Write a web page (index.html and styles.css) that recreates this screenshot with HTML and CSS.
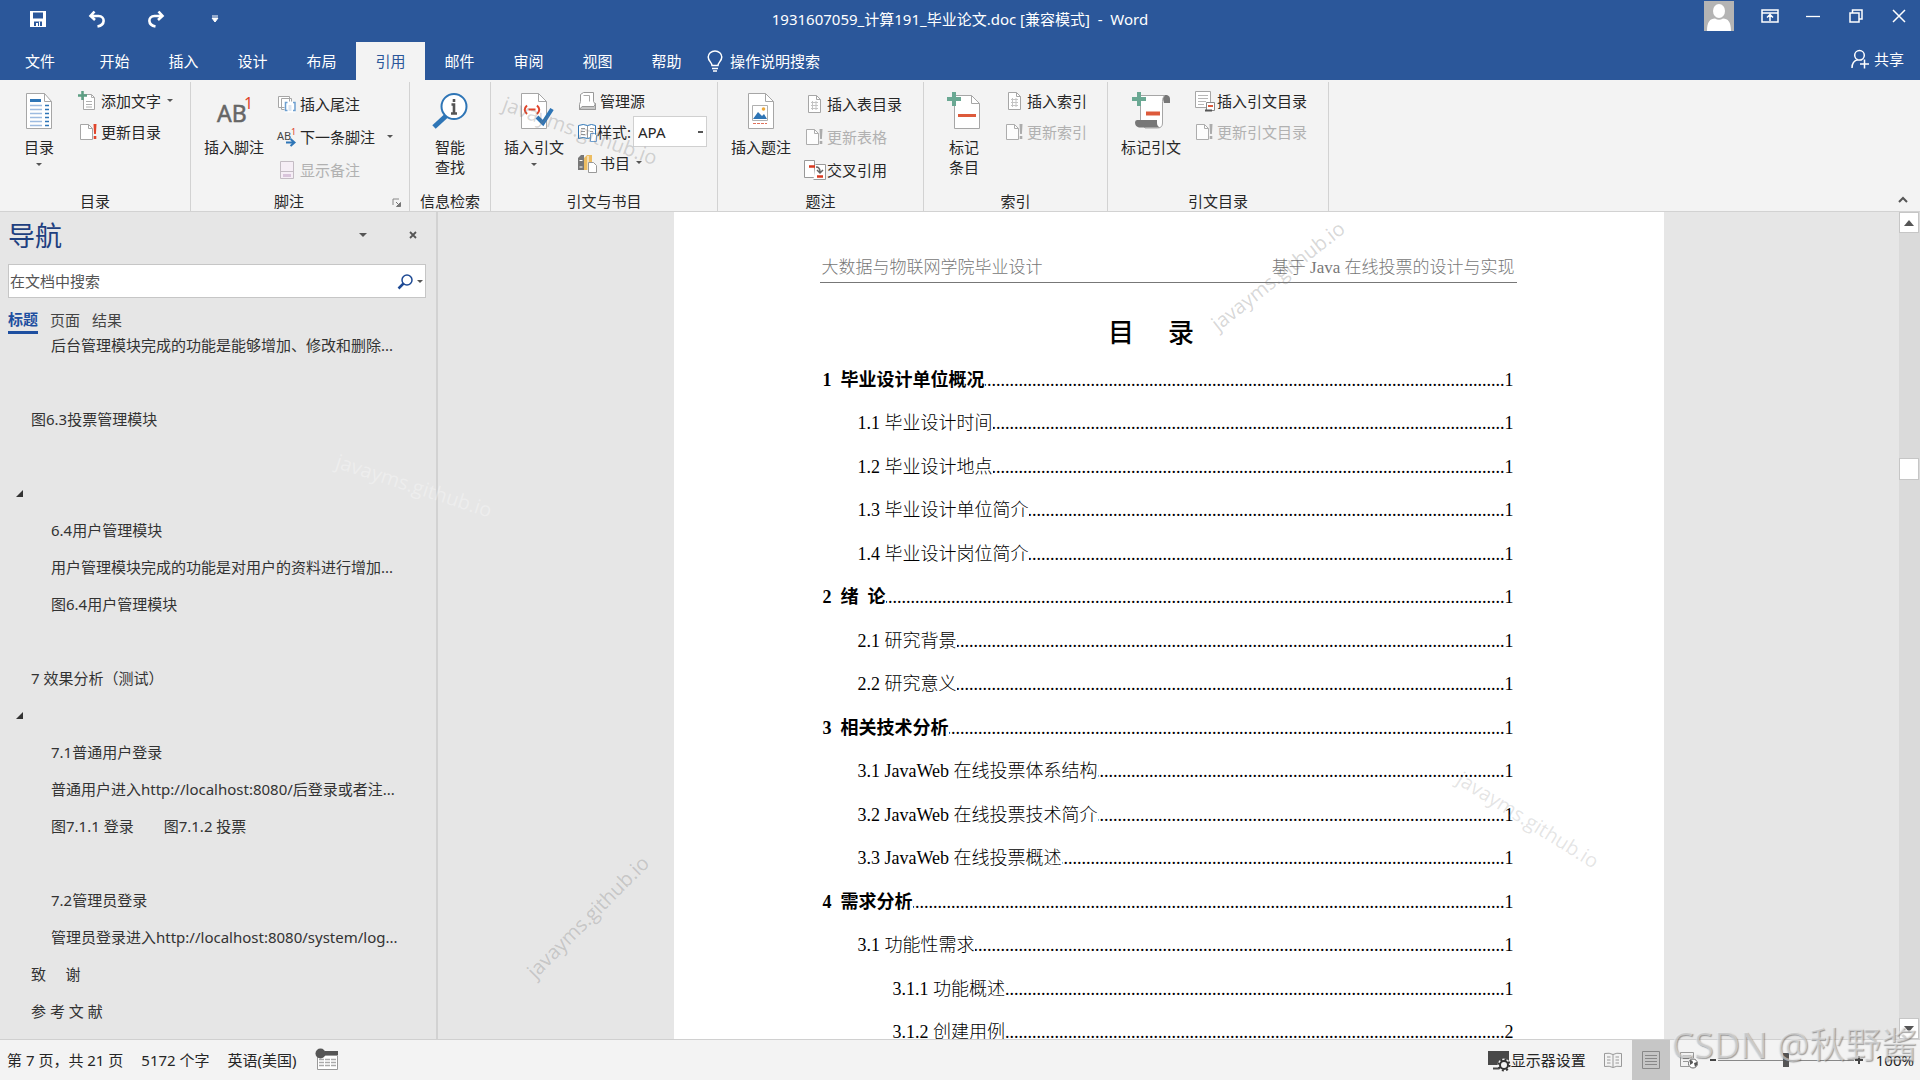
FILE: index.html
```html
<!DOCTYPE html>
<html lang="zh-CN">
<head>
<meta charset="utf-8">
<title>1931607059_计算191_毕业论文.doc - Word</title>
<link rel="stylesheet" href="styles.css">
</head>
<body>
<svg class="defs" aria-hidden="true">
  <symbol id="page-bang" viewBox="0 0 20 20">
    <path d="M2.5 2.5h8l4 4v11h-12z" class="sheet"/><path d="M10.500 2.500v4h4" class="fold"/>
    <path d="M15.500 2h3l-.6 10h-1.800zM15.700 14h2.600v3h-2.600z" class="bang"/>
  </symbol>
  <symbol id="page-lines" viewBox="0 0 20 20">
    <path d="M4.500 1.500h8l4 4v13h-12z" fill="#fff" stroke="#a6a6a6"/><path d="M12.500 1.500v4h4" fill="none" stroke="#a6a6a6"/>
    <path d="M7 8.500h7M7 11.500h7M7 14.500h7M8.500 7v9M12 7v9" stroke="#c4c4c4"/>
  </symbol>
</svg>

<header class="titlebar">
  <div class="quick">
    <button class="tool" aria-label="保存"><svg width="18" height="18" viewBox="0 0 18 18"><path d="M1 1h16v16H1z" fill="#fff"/><path d="M4 2.500h10v6H4z" fill="#2b579a"/><path d="M5 11.500h8V16H5z" fill="#2b579a"/><path d="M7 13h2v3H7zM10 11.500h1V16h-1z" fill="#fff"/></svg></button>
    <button class="tool" aria-label="撤消"><svg width="18" height="18" viewBox="0 0 18 18"><path d="M6.500 1.500 2.500 6l4.500 4M3 6h7.500c7 .5 7 9-1 10.500" fill="none" stroke="#fff" stroke-width="2.600"/></svg></button>
    <button class="tool" aria-label="恢复"><svg width="18" height="18" viewBox="0 0 18 18"><path d="m11.500 1.500 4 4.500-4.500 4M15 6H7.500c-7 .5-7 9 1 10.500" fill="none" stroke="#fff" stroke-width="2.600"/></svg></button>
    <button class="tool" aria-label="自定义快速访问工具栏"><svg width="8" height="8" viewBox="0 0 8 8"><path d="M1 1h6M1 3h6L4 7z" stroke="#fff" stroke-width="1" fill="#fff"/></svg></button>
  </div>
  <h1 class="filename">1931607059_计算191_毕业论文.doc [兼容模式]&nbsp; -&nbsp; Word</h1>
  <div class="window">
    <svg class="avatar" width="30" height="30" viewBox="0 0 30 30"><path d="M0 0h30v30H0z" fill="#b4b4b4"/><ellipse cx="15" cy="10" rx="6" ry="7" fill="#fff"/><path d="M3 30c0-9 3-12.500 8-12.500q4 2.500 8 0c5 0 8 3.500 8 12.500z" fill="#fff"/></svg>
    <button class="tool" aria-label="功能区显示选项"><svg width="18" height="14" viewBox="0 0 18 14"><path d="M1 1h16v12H1zM1 4h16M9 12V6M6 8.500 9 5.500l3 3" fill="none" stroke="#fff" stroke-width="1.500"/></svg></button>
    <button class="tool" aria-label="最小化"><svg width="14" height="14" viewBox="0 0 14 14"><path d="M0 7.500h14" stroke="#fff" stroke-width="1.300"/></svg></button>
    <button class="tool" aria-label="向下还原"><svg width="14" height="14" viewBox="0 0 14 14"><path d="M1 4h9v9H1zM3.500 4V1H13v9h-3" fill="none" stroke="#fff" stroke-width="1.500"/></svg></button>
    <button class="tool" aria-label="关闭"><svg width="14" height="14" viewBox="0 0 14 14"><path d="m1 1 12 12M13 1 1 13" stroke="#fff" stroke-width="1.500"/></svg></button>
  </div>
</header>

<nav class="tabs">
  <button class="tab file">文件</button>
  <button class="tab">开始</button>
  <button class="tab">插入</button>
  <button class="tab">设计</button>
  <button class="tab">布局</button>
  <button class="tab active">引用</button>
  <button class="tab">邮件</button>
  <button class="tab">审阅</button>
  <button class="tab">视图</button>
  <button class="tab">帮助</button>
  <button class="tell"><svg width="16" height="22" viewBox="0 0 16 22"><path d="M5 15.500c0-3-3.800-4.500-3.800-8.500a6.800 6 0 0 1 13.600 0c0 4-3.800 5.500-3.800 8.500zM5 18.500h6M6 21h4" fill="none" stroke="#fff" stroke-width="1.500"/></svg>操作说明搜索</button>
  <button class="share"><svg width="18" height="20" viewBox="0 0 18 20"><path d="M1 19c0-5 2-7.500 6-8.500M9.500 10.500l1.500.5M8.500 1.500a4.800 4.800 0 0 1 0 9.600 4.800 4.800 0 0 1 0-9.600M9 15h9M13.500 10.500v9" fill="none" stroke="#fff" stroke-width="1.500"/></svg>共享</button>
</nav>

<section class="ribbon">
  <div class="group g-toc">
    <div class="body">
      <button class="big"><svg width="36" height="38" viewBox="0 0 36 38"><path d="M5.500 1.500h18l7 8v27h-25z" fill="#fff" stroke="#a6a6a6"/><path d="M23.500 1.500v8h7" fill="none" stroke="#a6a6a6"/><path d="M9 8.500h11" stroke="#2e75b6" stroke-width="3"/><path d="M9 13.500h12M9 17.500h12M9 21.500h12M9 25.500h12M9 29.500h12M9 33.500h12" stroke="#9dbbe0" stroke-width="1.500"/><path d="M24 13.500h4M24 17.500h4M24 21.500h4M24 25.500h4M24 29.500h4M24 33.500h4" stroke="#2e75b6" stroke-width="1.500"/></svg><span>目录</span><i class="caret"></i></button>
      <div class="list">
        <button class="small"><svg width="20" height="20" viewBox="0 0 20 20"><path d="M5.500 3.500h8l3 3v12h-11z" fill="#fff" stroke="#a6a6a6"/><path d="M8 10.500h6M8 13.500h6M8 16h6M13.500 3.500v3h3" fill="none" stroke="#b0b0b0"/><path d="M4.500 0v9M0 4.500h9" stroke="#5c9e83" stroke-width="2.500"/></svg><span>添加文字</span><i class="caret"></i></button>
        <button class="small"><svg class="bang-on" width="20" height="20"><use href="#page-bang"/></svg><span>更新目录</span></button>
      </div>
    </div>
    <h2>目录</h2>
  </div>
  <div class="group g-note">
    <div class="body">
      <button class="big"><svg width="40" height="38" viewBox="0 0 40 38"><text x="3" y="30" font-size="23" fill="#666" stroke="#666" stroke-width=".5">AB</text><text x="30" y="17" font-size="16" fill="#e0452b">1</text></svg><span>插入脚注</span></button>
      <div class="list loose">
        <button class="small"><svg width="20" height="20" viewBox="0 0 20 20"><path d="M1.500 2.500h11v11h-11zM4.500 4.500h10v11h-10z" fill="#fff" stroke="#a6a6a6"/><path d="M7.500 7.500h11v11h-11z" fill="#fff"/><path d="M10.500 8.500h-2v8h2M16 8.500h2v8h-2" fill="none" stroke="#6d9fd0" stroke-width="1.500"/><path d="M11.500 11h3v6h-3z" fill="#dce6f2"/></svg><span>插入尾注</span></button>
        <button class="small"><svg width="20" height="20" viewBox="0 0 20 20"><text x="0" y="13" font-size="11" fill="#444">AB</text><text x="14" y="8" font-size="9" fill="#e0452b">1</text><path d="M9 15.500h8M13.500 12l4 3.500-4 3.500" fill="none" stroke="#2e75b6" stroke-width="2"/></svg><span>下一条脚注</span><i class="caret far"></i></button>
        <button class="small" disabled><svg width="20" height="20" viewBox="0 0 20 20"><path d="M3.500 1.500h13v17h-13z" fill="#f6eef6" stroke="#c4bcc4"/><path d="M3.500 11.500h13" stroke="#c4bcc4"/><path d="M6 14h8v3H6z" fill="#d9c4db"/></svg><span>显示备注</span></button>
      </div>
    </div>
    <h2>脚注</h2>
    <button class="launcher" aria-label="脚注和尾注"><svg width="9" height="9" viewBox="0 0 9 9"><path d="M1 7V1h6" fill="none" stroke="#888"/><path d="M8.500 4.500v4h-4zM4 4l3 3" fill="#777" stroke="#777"/></svg></button>
  </div>
  <div class="group g-look">
    <div class="body">
      <button class="big"><svg width="38" height="38" viewBox="0 0 38 38"><path d="M15 24 3 35" stroke="#2e75b6" stroke-width="5"/><circle cx="23" cy="14.500" r="12.500" fill="#fff" stroke="#2e75b6" stroke-width="2"/><path d="M23 7v3M20.500 12.500H23V21M20 21.500h6" fill="none" stroke="#555" stroke-width="2.600"/></svg><span>智能<br>查找</span></button>
    </div>
    <h2>信息检索</h2>
  </div>
  <div class="group g-cite">
    <div class="body">
      <button class="big"><svg width="40" height="38" viewBox="0 0 40 38"><path d="M7.500 1.500h17l8 8v27h-25z" fill="#fff" stroke="#a6a6a6"/><path d="M24.500 1.500v8h8" fill="none" stroke="#a6a6a6"/><path d="M13 13.500q-4.500 4 0 8.500M23 13.500q4.500 4 0 8.500M14.500 17.500h7" fill="none" stroke="#e0452b" stroke-width="2"/><path d="m23 25 6 6 9-14" fill="none" stroke="#2e75b6" stroke-width="4"/></svg><span>插入引文</span><i class="caret"></i></button>
      <div class="list">
        <button class="small"><svg width="20" height="20" viewBox="0 0 20 20"><path d="M3.500 10.500v-7l3-2h10v9l2 3v5h-16v-5z" fill="#fff" stroke="#999"/><path d="M5 15.500h12l1.500-3v6h-16z" fill="#c6c6c6" stroke="#999"/><path d="M6.500 4.500h6v6" fill="none" stroke="#aaa"/></svg><span>管理源</span></button>
        <div class="small style-row"><svg width="20" height="20" viewBox="0 0 20 20"><path d="M1.500 3.500q5-2 9 0 4-2 8 0v13q-4-2-8 0-4-2-9 0z" fill="#fff" stroke="#2e75b6"/><path d="M10.500 4v12M4 6.500h4M4 9.500h4M4 12.500h4M13 6.500h4M13 9.500h3" stroke="#999"/><path d="M13.500 11.500h4l2 2v6h-6z" fill="#fff" stroke="#6d9fd0"/></svg><label for="cite-style">样式:</label><select id="cite-style"><option>APA</option></select></div>
        <button class="small"><svg width="20" height="20" viewBox="0 0 20 20"><path d="m1 5 3-3h3v15H1z" fill="#777"/><path d="m7 5 3-3h5v15H7z" fill="#edbd62"/><path d="M2.500 7.500h3M2.500 14h3M11 3v14" stroke="#fff"/><path d="M11.500 9.500h5l3 3v7h-8z" fill="#fff" stroke="#999"/></svg><span>书目</span><i class="caret"></i></button>
      </div>
    </div>
    <h2>引文与书目</h2>
  </div>
  <div class="group g-cap">
    <div class="body">
      <button class="big"><svg width="36" height="38" viewBox="0 0 36 38"><path d="M5.500 1.500h17l8 8v27h-25z" fill="#fff" stroke="#a6a6a6"/><path d="M22.500 1.500v8h8" fill="none" stroke="#a6a6a6"/><path d="M9.500 13.500h15v15h-15z" fill="#fff" stroke="#b0b0b0"/><path d="m10 27 5-7 4 4 2-2 3 5z" fill="#2e75b6"/><circle cx="20.500" cy="17" r="1.800" fill="#edaa3c"/><path d="M10 31.500h14" stroke="#e0715b" stroke-dasharray="3 1"/></svg><span>插入题注</span></button>
      <div class="list loose">
        <button class="small"><svg width="20" height="20"><use href="#page-lines"/></svg><span>插入表目录</span></button>
        <button class="small" disabled><svg class="bang-off" width="20" height="20"><use href="#page-bang"/></svg><span>更新表格</span></button>
        <button class="small"><svg width="22" height="22" viewBox="0 0 22 22"><path d="M.5 1.500h10v17H.5z" fill="#fff" stroke="#999"/><path d="M11.500 5.500h10v15h-12" fill="#fff" stroke="#999"/><path d="M5 7.500h6M13 17.500h6" stroke="#d9391f" stroke-width="2.500"/><path d="M12 8q4 0 4 5M13 11l3 3 3-3" fill="none" stroke="#666" stroke-width="1.500"/></svg><span>交叉引用</span></button>
      </div>
    </div>
    <h2>题注</h2>
  </div>
  <div class="group g-index">
    <div class="body">
      <button class="big"><svg width="40" height="38" viewBox="0 0 40 38"><path d="M10.500 3.500h17l8 8v25h-25z" fill="#fff" stroke="#a6a6a6"/><path d="M27.500 3.500v8h8" fill="none" stroke="#a6a6a6"/><path d="M14 23.500h18" stroke="#dd5a3b" stroke-width="3"/><path d="M10 0v14M3 7h14" stroke="#6aa893" stroke-width="4"/></svg><span>标记<br>条目</span></button>
      <div class="list">
        <button class="small"><svg width="20" height="20"><use href="#page-lines"/></svg><span>插入索引</span></button>
        <button class="small" disabled><svg class="bang-off" width="20" height="20"><use href="#page-bang"/></svg><span>更新索引</span></button>
      </div>
    </div>
    <h2>索引</h2>
  </div>
  <div class="group g-auth">
    <div class="body">
      <button class="big"><svg width="40" height="38" viewBox="0 0 40 38"><path d="M31 3h5q3 1 3 4v4h-6z" fill="#777"/><path d="M9.500 28V3.500h24q-2 2-2 6V31q0 5-5 5H14z" fill="#fff" stroke="#a6a6a6"/><path d="M6 28h20v3q0 3 3 4.500H8q-4-1-4-5 0-2.500 2-2.500z" fill="#777"/><path d="M15 21.500h14" stroke="#dd5a3b" stroke-width="4"/><path d="M8 0v14M1 7h14" stroke="#6aa893" stroke-width="4"/></svg><span>标记引文</span></button>
      <div class="list">
        <button class="small"><svg width="22" height="22" viewBox="0 0 22 22"><path d="M1.500 1.500h15v16h-15z" fill="#fff" stroke="#a6a6a6"/><path d="M4 5.500h10M4 8.500h10M4 11.500h8M4 14.500h6" stroke="#b8b8b8"/><path d="M12.500 12.500h8v8h-8z" fill="#fff" stroke="#888"/><path d="M11 19.500h7v2h-7z" fill="#555"/><path d="M14 16h5" stroke="#dd5a3b" stroke-width="2"/></svg><span>插入引文目录</span></button>
        <button class="small" disabled><svg class="bang-off" width="20" height="20"><use href="#page-bang"/></svg><span>更新引文目录</span></button>
      </div>
    </div>
    <h2>引文目录</h2>
  </div>
  <button class="collapse" aria-label="折叠功能区"><svg width="10" height="7" viewBox="0 0 10 7"><path d="m1 6 4-4 4 4" fill="none" stroke="#555" stroke-width="2"/></svg></button>
</section>

<main class="work">
  <aside class="pane">
    <div class="pane-head">
      <h2>导航</h2>
      <button class="tool" aria-label="任务窗格选项"><i class="caret wide"></i></button>
      <button class="tool" aria-label="关闭窗格"><svg width="8" height="8" viewBox="0 0 8 8"><path d="m1 1 6 6M7 1 1 7" stroke="#555" stroke-width="1.800"/></svg></button>
    </div>
    <div class="search">
      <input type="text" placeholder="在文档中搜索" aria-label="在文档中搜索">
      <button class="tool" aria-label="搜索"><svg width="15" height="15" viewBox="0 0 15 15"><circle cx="9" cy="6" r="5" fill="none" stroke="#1e4a94" stroke-width="1.500"/><path d="m5.500 9.500-5 5" stroke="#1e4a94" stroke-width="2.500"/></svg><i class="caret"></i></button>
    </div>
    <div class="pane-tabs">
      <button class="on">标题</button>
      <button>页面</button>
      <button>结果</button>
    </div>
    <div class="outline">
      <ul>
        <li class="l2">后台管理模块完成的功能是能够增加、修改和删除...</li>
        <li></li>
        <li>图6.3投票管理模块</li>
        <li></li>
        <li class="node"><svg width="7" height="7" viewBox="0 0 7 7"><path d="M7 0v7H0z" fill="#333"/></svg></li>
        <li class="l2">6.4用户管理模块</li>
        <li class="l2">用户管理模块完成的功能是对用户的资料进行增加...</li>
        <li class="l2">图6.4用户管理模块</li>
        <li></li>
        <li>7 效果分析（测试）</li>
        <li class="node"><svg width="7" height="7" viewBox="0 0 7 7"><path d="M7 0v7H0z" fill="#333"/></svg></li>
        <li class="l2">7.1普通用户登录</li>
        <li class="l2">普通用户进入http://localhost:8080/后登录或者注...</li>
        <li class="l2 pair"><span>图7.1.1 登录</span><span>图7.1.2 投票</span></li>
        <li></li>
        <li class="l2">7.2管理员登录</li>
        <li class="l2">管理员登录进入http://localhost:8080/system/log...</li>
        <li>致&nbsp;&nbsp;&nbsp; &nbsp;谢</li>
        <li>参 考 文 献</li>
      </ul>
    </div>
  </aside>

  <div class="canvas">
    <article class="paper">
      <div class="running"><span>大数据与物联网学院毕业设计</span><span>基于 Java 在线投票的设计与实现</span></div>
      <h2 class="doc-title"><span>目</span><span>录</span></h2>
      <ol class="toc">
        <li class="t1"><b>1&nbsp; 毕业设计单位概况</b><i class="dots"></i><span>1</span></li>
        <li class="t2"><a href="#s">1.1 毕业设计时间</a><i class="dots"></i><span>1</span></li>
        <li class="t2"><a href="#s">1.2 毕业设计地点</a><i class="dots"></i><span>1</span></li>
        <li class="t2"><a href="#s">1.3 毕业设计单位简介</a><i class="dots"></i><span>1</span></li>
        <li class="t2"><a href="#s">1.4 毕业设计岗位简介</a><i class="dots"></i><span>1</span></li>
        <li class="t1"><b>2&nbsp; 绪&nbsp; 论</b><i class="dots"></i><span>1</span></li>
        <li class="t2"><a href="#s">2.1 研究背景</a><i class="dots"></i><span>1</span></li>
        <li class="t2"><a href="#s">2.2 研究意义</a><i class="dots"></i><span>1</span></li>
        <li class="t1"><b>3&nbsp; 相关技术分析</b><i class="dots"></i><span>1</span></li>
        <li class="t2"><a href="#s">3.1 JavaWeb 在线投票体系结构</a><i class="dots"></i><span>1</span></li>
        <li class="t2"><a href="#s">3.2 JavaWeb 在线投票技术简介</a><i class="dots"></i><span>1</span></li>
        <li class="t2"><a href="#s">3.3 JavaWeb 在线投票概述</a><i class="dots"></i><span>1</span></li>
        <li class="t1"><b>4&nbsp; 需求分析</b><i class="dots"></i><span>1</span></li>
        <li class="t2"><a href="#s">3.1 功能性需求</a><i class="dots"></i><span>1</span></li>
        <li class="t3"><a href="#s">3.1.1 功能概述</a><i class="dots"></i><span>1</span></li>
        <li class="t3"><a href="#s">3.1.2 创建用例</a><i class="dots"></i><span>2</span></li>
      </ol>
    </article>
  </div>
  <div class="scroll">
    <button aria-label="向上滚动"><svg width="10" height="6" viewBox="0 0 10 6"><path d="m0 6 5-6 5 6z" fill="#555"/></svg></button>
    <div class="track"><div class="thumb"></div></div>
    <button aria-label="向下滚动"><svg width="10" height="6" viewBox="0 0 10 6"><path d="m0 0 5 6 5-6z" fill="#555"/></svg></button>
  </div>
</main>

<footer class="status">
  <span>第 7 页，共 21 页</span>
  <span>5172 个字</span>
  <span>英语(美国)</span>
  <svg width="24" height="24" viewBox="0 0 24 24"><path d="M2.500 7.500h20v14h-20z" fill="#fff" stroke="#999"/><path d="M10 3h13v4H10z" fill="#555"/><path d="M4 11.500h17M4 14.500h17M4 17.500h17" stroke="#aaa" stroke-width="1.500" stroke-dasharray="5 1"/><circle cx="5.500" cy="5.500" r="5" fill="#555"/></svg>
  <div class="views">
    <button class="display"><svg width="24" height="24" viewBox="0 0 24 24"><path d="M1 3h21v14H1z" fill="#484848"/><path d="M6 20.500h7" stroke="#484848" stroke-width="2"/><circle cx="17" cy="17" r="6.500" fill="#f3f3f3"/><circle cx="17" cy="17" r="4" fill="none" stroke="#333" stroke-width="2"/><circle cx="17" cy="17" r="5.500" fill="none" stroke="#333" stroke-width="2" stroke-dasharray="2 2.300"/></svg>显示器设置</button>
    <button class="view" aria-label="阅读视图"><svg width="18" height="18" viewBox="0 0 18 18"><path d="M.5 2.500q5-1 8.500 1 3.500-2 8.500-1v13q-5-1-8.500 1-3.500-2-8.500-1zM9 3.500v13M3 6h3.500M3 9h3.500M3 12h3.500M11.500 6H15M11.500 9H15M11.500 12H15" fill="none" stroke="#999"/></svg></button>
    <button class="view on" aria-label="页面视图"><svg width="18" height="18" viewBox="0 0 18 18"><path d="M.5.5h17v17H.5zM3 4.500h12M3 7.500h12M3 10.500h12M3 13.500h12" fill="none" stroke="#888"/></svg></button>
    <button class="view" aria-label="Web 版式视图"><svg width="18" height="18" viewBox="0 0 18 18"><path d="M9 15.500H.5v-14h13V7M3 4.500h8M3 7.500h6M3 10.500h5" fill="none" stroke="#999"/><circle cx="13" cy="12.500" r="4.500" fill="#fff" stroke="#666"/><path d="M10 9q3 0 3 3l-3 2zM14 12l3-1v3l-2 2z" fill="#555"/></svg></button>
    <button class="tool zoom-btn" aria-label="缩小"><svg width="10" height="10" viewBox="0 0 10 10"><path d="M2 5h6" stroke="#444" stroke-width="2"/></svg></button>
    <input class="zoom" type="range" min="0" max="200" value="100" aria-label="缩放">
    <button class="tool zoom-btn" aria-label="放大"><svg width="10" height="10" viewBox="0 0 10 10"><path d="M1 5h8M5 1v8" stroke="#444" stroke-width="2"/></svg></button>
    <button class="percent">100%</button>
  </div>
</footer>

<div class="mark m1">javayms.github.io</div>
<div class="mark m2">javayms.github.io</div>
<div class="mark m3">javayms.github.io</div>
<div class="mark m4">javayms.github.io</div>
<div class="mark m5">javayms.github.io</div>
<div class="credit">CSDN @秋野酱</div>
</body>
</html>
```
FILE: styles.css
```css
* { box-sizing: border-box; }

body {
  margin: 0;
  height: 100vh;
  display: flex;
  flex-direction: column;
  overflow: hidden;
  position: relative;
  background: #e6e6e6;
  color: #262626;
  font: 15px/20px "Noto Sans", "Noto Sans CJK SC", sans-serif;
}

button, input, select { font: inherit; color: inherit; }
button { border: 0; padding: 0; background: none; white-space: nowrap; }
h1, h2 { margin: 0; font-size: 15px; font-weight: 400; }
ul, ol { margin: 0; padding: 0; list-style: none; }
svg { flex: none; display: block; overflow: visible; }
.defs { position: absolute; width: 0; height: 0; }
.tool { display: flex; align-items: center; justify-content: center; }

.caret {
  flex: none;
  border: 3px solid transparent;
  border-top: 3px solid #555;
  border-bottom: 0;
}
.caret.wide { border-width: 4px 4px 0; }

/* title bar */
.titlebar {
  flex: none;
  display: grid;
  grid-template-columns: 1fr auto 1fr;
  height: 42px;
  padding-bottom: 4px;
  background: #2b579a;
  color: #fff;
}
.quick, .window { display: flex; align-items: center; }
.quick { padding-left: 8px; }
.quick .tool { width: 59px; height: 38px; }
.filename { align-self: center; }
.window { justify-content: flex-end; }
.window .tool { width: 43px; height: 28px; margin-bottom: 6px; }
.avatar { align-self: flex-start; margin: 1px 14px 0 0; }

/* ribbon tabs */
.tabs { flex: none; display: flex; height: 38px; background: #2b579a; color: #fff; }
.tab { width: 69px; }
.tab.file { width: 80px; }
.tab.active { background: #f3f3f3; color: #2b579a; }
.tell, .share { display: flex; align-items: center; gap: 7px; }
.tell { margin-left: 6px; }
.share { margin-left: auto; padding: 0 16px 4px 0; gap: 5px; }

/* ribbon */
.ribbon {
  flex: none;
  display: flex;
  height: 132px;
  background: #f3f3f3;
  border-bottom: 1px solid #d2d2d2;
}
.group {
  position: relative;
  display: flex;
  flex-direction: column;
  justify-content: space-between;
  margin-top: 2px;
  border-right: 1px solid #d2d2d2;
}
.group h2 { text-align: center; }
.body { display: flex; }
.big {
  display: flex;
  flex-direction: column;
  align-items: center;
  width: 86px;
  padding-top: 10px;
}
.big span { margin-top: 7px; }
.big .caret { margin-top: 6px; }
.g-toc .big, .g-look .big, .g-index .big { width: 80px; }
.g-toc .big { width: 78px; }
.list { display: flex; flex-direction: column; padding-top: 3px; }
.list.loose { padding-top: 5px; }
.small { display: flex; align-items: center; height: 31px; }
.loose .small { height: 33px; }
.small svg { margin-right: 3px; }
.small svg[width="22"] { margin-right: 1px; }
.small .caret { margin-left: 6px; }
.small .caret.far { margin-left: 12px; }
.small:disabled { color: #b1b1b1; }
.style-row svg { margin-right: 0; }
.style-row label { width: 36px; }
.style-row select {
  width: 74px;
  height: 31px;
  padding: 0 4px;
  appearance: none;
  border: 1px solid #d0d0d0;
  border-radius: 0;
  background: linear-gradient(#555, #555) 64px 14px / 5px 2px no-repeat #fff;
}
.g-toc { width: 191px; }
.g-note { width: 219px; }
.g-note h2 { padding-right: 22px; }
.g-look { width: 81px; }
.g-cite { width: 227px; }
.g-cap { width: 206px; }
.g-index { width: 184px; }
.g-auth { width: 221px; }
.launcher { position: absolute; right: 8px; bottom: 4px; }
.collapse { margin: auto 12px 8px auto; }
.sheet { fill: #fff; stroke: #a6a6a6; }
.fold { fill: none; stroke: #a6a6a6; }
.bang-on { color: #e0452b; }
.bang-off { color: #a5a5a5; opacity: .9; }
.bang { fill: currentColor; }

/* work area */
.work { flex: 1; min-height: 0; display: flex; }
.pane {
  flex: none;
  display: flex;
  flex-direction: column;
  width: 438px;
  padding: 8px 10px 0 8px;
  border-right: 2px solid #d2d2d2;
}
.pane-head { display: flex; height: 44px; }
.pane-head h2 { flex: 1; color: #1e4080; font-size: 27px; line-height: 32px; }
.pane-head .tool { width: 50px; height: 30px; }
.pane-head .tool:last-child { margin-right: -12px; }
.search { display: flex; height: 34px; border: 1px solid #c6c6c6; background: #fff; }
.search input { flex: 1; min-width: 0; border: 0; padding: 0 1px; background: none; }
.search input::placeholder { color: #555; opacity: 1; }
.search .tool { padding-right: 2px; gap: 4px; }
.pane-tabs { display: flex; gap: 12px; height: 40px; padding-top: 11px; }
.pane-tabs button { height: 25px; padding-bottom: 3px; color: #444; }
.pane-tabs .on { color: #1e4fa0; font-weight: 700; border-bottom: 3px solid #1e4fa0; }
.outline { flex: 1; min-height: 0; overflow: hidden; }
.outline ul { margin-top: -11px; }
.outline li { height: 37px; padding-left: 23px; line-height: 37px; color: #333; white-space: nowrap; }
.outline .l2 { padding-left: 43px; }
.outline .node { display: flex; align-items: center; padding-left: 8px; }
.outline .pair { display: flex; gap: 30px; }

.canvas { flex: 1; min-width: 0; overflow: hidden; }
.paper {
  width: 990px;
  max-width: 100%;
  min-height: 100%;
  margin: 0 auto;
  padding: 42px 147px 0 146px;
  background: #fff;
  color: #000;
  font: 300 18px/28px "Liberation Serif", "Noto Sans CJK SC", serif;
}
.running {
  display: flex;
  justify-content: space-between;
  padding: 0 2px;
  border-bottom: 1px solid #777;
  color: #777;
  font-size: 17px;
}
.doc-title {
  display: flex;
  justify-content: center;
  gap: 34px;
  margin: 30px 34px 10px 0;
  font: 500 26px/36px "Noto Sans CJK SC", sans-serif;
}
.toc { padding: 0 3px; }
.toc li { display: flex; height: 43px; line-height: 43px; white-space: nowrap; }
.toc li:nth-child(even) { height: 44px; }
.toc b { font-weight: 700; }
.toc a { color: inherit; text-decoration: none; }
.toc .t2 { padding-left: 35px; }
.toc .t3 { padding-left: 70px; }
.dots { flex: 1; min-width: 0; overflow: hidden; direction: rtl; font-style: normal; }
.dots::before {
  content: "........................................................................................................................................................................";
}

.scroll { flex: none; display: flex; flex-direction: column; width: 21px; padding-right: 1px; background: #dadada; }
.scroll button {
  display: flex;
  align-items: center;
  justify-content: center;
  height: 21px;
  border: 1px solid #c6c6c6;
  background: #fff;
}
.track { flex: 1; }
.thumb { height: 22px; margin-top: 225px; border: 1px solid #c6c6c6; background: #fff; }

/* status bar */
.status {
  flex: none;
  display: flex;
  align-items: center;
  gap: 18px;
  height: 41px;
  padding-left: 7px;
  border-top: 1px solid #d0d0d0;
  background: #f3f3f3;
}
.views { display: flex; align-items: center; height: 40px; margin-left: auto; padding-right: 6px; }
.display { display: flex; align-items: center; margin-right: 8px; }
.view { display: flex; align-items: center; justify-content: center; width: 38px; height: 40px; }
.view.on { background: #c6c6c6; }
.zoom-btn { width: 10px; height: 20px; }
.zoom { appearance: none; width: 136px; height: 20px; margin: 0; background: linear-gradient(#888, #888) 0 10px / 100% 1px no-repeat; }
.zoom::-webkit-slider-thumb { appearance: none; width: 6px; height: 14px; background: #555; }
.percent { margin-left: 12px; }

/* translucent stamps over the window */
.mark {
  position: absolute;
  width: 164px;
  margin: -14px 0 0 -82px;
  color: rgba(120, 120, 120, .3);
  font: 20px/28px "Open Sans", sans-serif;
  text-align: center;
  white-space: nowrap;
  pointer-events: none;
}
.m1 { left: 580px; top: 131px; transform: rotate(20deg); }
.m2 { left: 1278px; top: 276px; transform: rotate(-38deg); }
.m3 { left: 414px; top: 486px; color: rgba(255, 255, 255, .3); transform: rotate(18deg); }
.m4 { left: 1528px; top: 820px; color: rgba(120, 120, 120, .2); transform: rotate(32deg); }
.m5 { left: 588px; top: 917px; transform: rotate(-45deg); }
.credit {
  position: absolute;
  right: 3px;
  bottom: 11px;
  color: rgba(240, 240, 240, .55);
  font-size: 36px;
  line-height: 48px;
  white-space: nowrap;
  text-shadow: 1px 1px 1px rgba(90, 90, 90, .55);
  pointer-events: none;
}
```
